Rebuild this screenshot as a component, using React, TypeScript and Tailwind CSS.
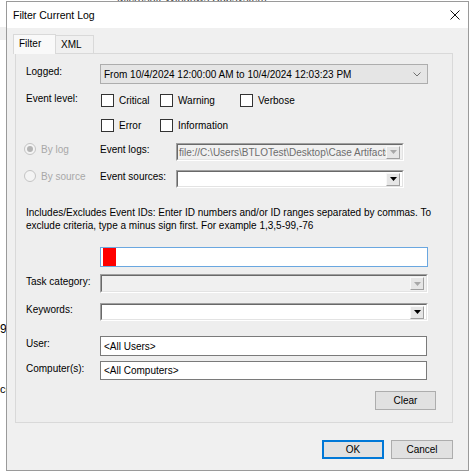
import React from "react";

const font = "font-['Liberation_Sans',Arial,sans-serif]";

const Checkbox = ({ label, className }: { label: string; className: string }) => (
  <div className={`flex items-center ${className}`}>
    <div className="w-[13px] h-[13px] border border-[#333333] bg-white shrink-0"></div>
    <span className="ml-[5px]">{label}</span>
  </div>
);

const Radio = ({ label, checked }: { label: string; checked?: boolean }) => (
  <div className="flex items-center w-[76px] -ml-[2px] mb-[6px]">
    <div className="w-[12px] h-[12px] rounded-full border border-[#c4c4c4] bg-[#f4f4f4] flex items-center justify-center shrink-0">
      {checked && <div className="w-[6px] h-[6px] rounded-full bg-[#b4b4b4]"></div>}
    </div>
    <span className="ml-[5px] text-[#a8a8a8]">{label}</span>
  </div>
);

const ArrowBtn = ({ disabled }: { disabled?: boolean }) => (
  <div className="w-[14px] h-[13px] mr-[2px] shrink-0 flex items-center justify-center bg-[#e6e6e6] border border-t-[#f8f8f8] border-l-[#f8f8f8] border-r-[#a0a0a0] border-b-[#a0a0a0]">
    <svg width="7" height="4" viewBox="0 0 7 4">
      <path d="M0 0 H7 L3.5 4 Z" fill={disabled ? "#a8a8a8" : "#000000"} />
    </svg>
  </div>
);

const SunkenCombo = ({
  className,
  disabled,
  text,
}: {
  className: string;
  disabled?: boolean;
  text?: string;
}) => (
  <div className={`${className} border border-t-[#a0a0a0] border-l-[#a0a0a0] border-r-white border-b-white`}>
    <div
      className={`h-full flex items-center border border-t-[#696969] border-l-[#696969] border-r-[#e3e3e3] border-b-[#e3e3e3] ${
        disabled ? "bg-[#f0f0f0]" : "bg-white"
      }`}
    >
      <div className="flex-1 min-w-0 overflow-hidden whitespace-nowrap pl-[1px] text-[#6d6d6d]">{text}</div>
      <ArrowBtn disabled={disabled} />
    </div>
  </div>
);

const TextBox = ({ value }: { value: string }) => (
  <div className="w-[327px] h-full border border-[#7a7a7a] bg-white flex items-center pl-[3px]">{value}</div>
);

const Button = ({ label, primary, className }: { label: string; primary?: boolean; className: string }) => (
  <div
    className={`${className} h-[19px] flex items-center justify-center bg-[#e1e1e1] ${
      primary ? "border-2 border-[#0078d7]" : "border border-[#adadad]"
    }`}
  >
    {label}
  </div>
);

export default function App() {
  return (
    <div className={`relative w-[472px] h-[473px] overflow-hidden bg-white text-[10px] text-black ${font}`}>
      {/* desktop behind the dialog */}
      <div className="absolute top-[27px] left-0 w-[6px] h-[13px] bg-[#efefef]"></div>
      <div className="absolute -top-[10px] left-[117px] text-[11px] text-[#444]">Microsoft Windows Subsystem</div>
      <div className="absolute top-[320px] left-0 text-[12px]">9</div>
      <div className="absolute top-[381px] left-0 text-[11px]">cc</div>

      {/* dialog window */}
      <div className="absolute top-[1px] left-[6px] w-[463px] h-[470px] border border-[#9a9a9a] bg-[#f0f0f0] flex flex-col">
        <div className="h-[26px] bg-white flex items-center justify-between pl-[6px] pr-[8px] shrink-0">
          <span className="text-[10.5px] mt-[2px]">Filter Current Log</span>
          <svg width="10" height="10" viewBox="0 0 10 10">
            <path d="M0.5 0.5 L9.5 9.5 M9.5 0.5 L0.5 9.5" stroke="#111" strokeWidth="1" />
          </svg>
        </div>

        {/* tabs */}
        <div className="flex pl-[6px] mt-[5px] h-[20px] items-end">
          <div className="relative z-10 h-[20px] w-[43px] bg-[#f9f9f9] border border-b-0 border-[#d9d9d9] flex items-center pl-[5px] -mb-[1px]">
            <span className="-mt-[2px]">Filter</span>
          </div>
          <div className="h-[18px] w-[38px] bg-[#f0f0f0] border border-l-0 border-b-0 border-[#d9d9d9] flex items-center pl-[5px]">
            XML
          </div>
        </div>

        {/* tab panel */}
        <div className="ml-[8px] w-[438px] h-[370px] border border-[#d9d9d9] bg-[#eeeeee] pl-[10px] flex flex-col">
          <div className="flex items-center h-[20px] mt-[10px]">
            <div className="w-[74px] mb-[6px]">Logged:</div>
            <div className="w-[328px] h-full bg-[#e5e5e5] border border-[#adadad] flex items-center justify-between pl-[3px] pr-[6px]">
              <span>From 10/4/2024 12:00:00 AM to 10/4/2024 12:03:23 PM</span>
              <svg width="8" height="5" viewBox="0 0 8 5">
                <path d="M0.5 0.5 L4 4 L7.5 0.5" stroke="#707070" strokeWidth="1" fill="none" />
              </svg>
            </div>
          </div>

          <div className="flex items-center h-[13px] mt-[10px]">
            <div className="w-[75px] mb-[5px]">Event level:</div>
            <Checkbox label="Critical" className="w-[59px]" />
            <Checkbox label="Warning" className="w-[80px]" />
            <Checkbox label="Verbose" className="w-[80px]" />
          </div>
          <div className="flex items-center h-[13px] mt-[12px]">
            <div className="w-[75px]"></div>
            <Checkbox label="Error" className="w-[59px]" />
            <Checkbox label="Information" className="w-[90px]" />
          </div>

          <div className="flex items-center h-[18px] mt-[11px]">
            <Radio label="By log" checked />
            <div className="w-[76px] mb-[6px]">Event logs:</div>
            <SunkenCombo
              className="w-[228px] h-full"
              disabled
              text="file://C:\Users\BTLOTest\Desktop\Case Artifacts\Log.evtx"
            />
          </div>
          <div className="flex items-center h-[18px] mt-[9px]">
            <Radio label="By source" />
            <div className="w-[76px] mb-[6px]">Event sources:</div>
            <SunkenCombo className="w-[228px] h-full" />
          </div>

          <div className="mt-[18px] leading-[13px] whitespace-nowrap">
            Includes/Excludes Event IDs: Enter ID numbers and/or ID ranges separated by commas. To
            <br />
            exclude criteria, type a minus sign first. For example 1,3,5-99,-76
          </div>

          <div className="flex h-[20px] mt-[15px]">
            <div className="w-[74px]"></div>
            <div className="w-[328px] h-full bg-white border border-[#6aa7e0] flex items-center pl-[2px]">
              <div className="w-[13px] h-[18px] bg-[#ff0000]"></div>
            </div>
          </div>

          <div className="flex items-center h-[19px] mt-[7px]">
            <div className="w-[74px] mb-[5px]">Task category:</div>
            <SunkenCombo className="w-[328px] h-full" disabled />
          </div>
          <div className="flex items-center h-[18px] mt-[10px]">
            <div className="w-[74px] mb-[6px]">Keywords:</div>
            <SunkenCombo className="w-[328px] h-full" />
          </div>

          <div className="flex items-center h-[20px] mt-[15px]">
            <div className="w-[74px] mb-[6px]">User:</div>
            <TextBox value="<All Users>" />
          </div>
          <div className="flex items-center h-[19px] mt-[5px]">
            <div className="w-[74px] mb-[5px]">Computer(s):</div>
            <TextBox value="<All Computers>" />
          </div>

          <div className="flex justify-end pr-[16px] mt-[11px]">
            <Button label="Clear" className="w-[61px] h-[18px]" />
          </div>
        </div>

        <div className="flex justify-end gap-[7px] pr-[15px] mt-[17px]">
          <Button label="OK" primary className="w-[62px]" />
          <Button label="Cancel" className="w-[62px]" />
        </div>
      </div>
    </div>
  );
}
